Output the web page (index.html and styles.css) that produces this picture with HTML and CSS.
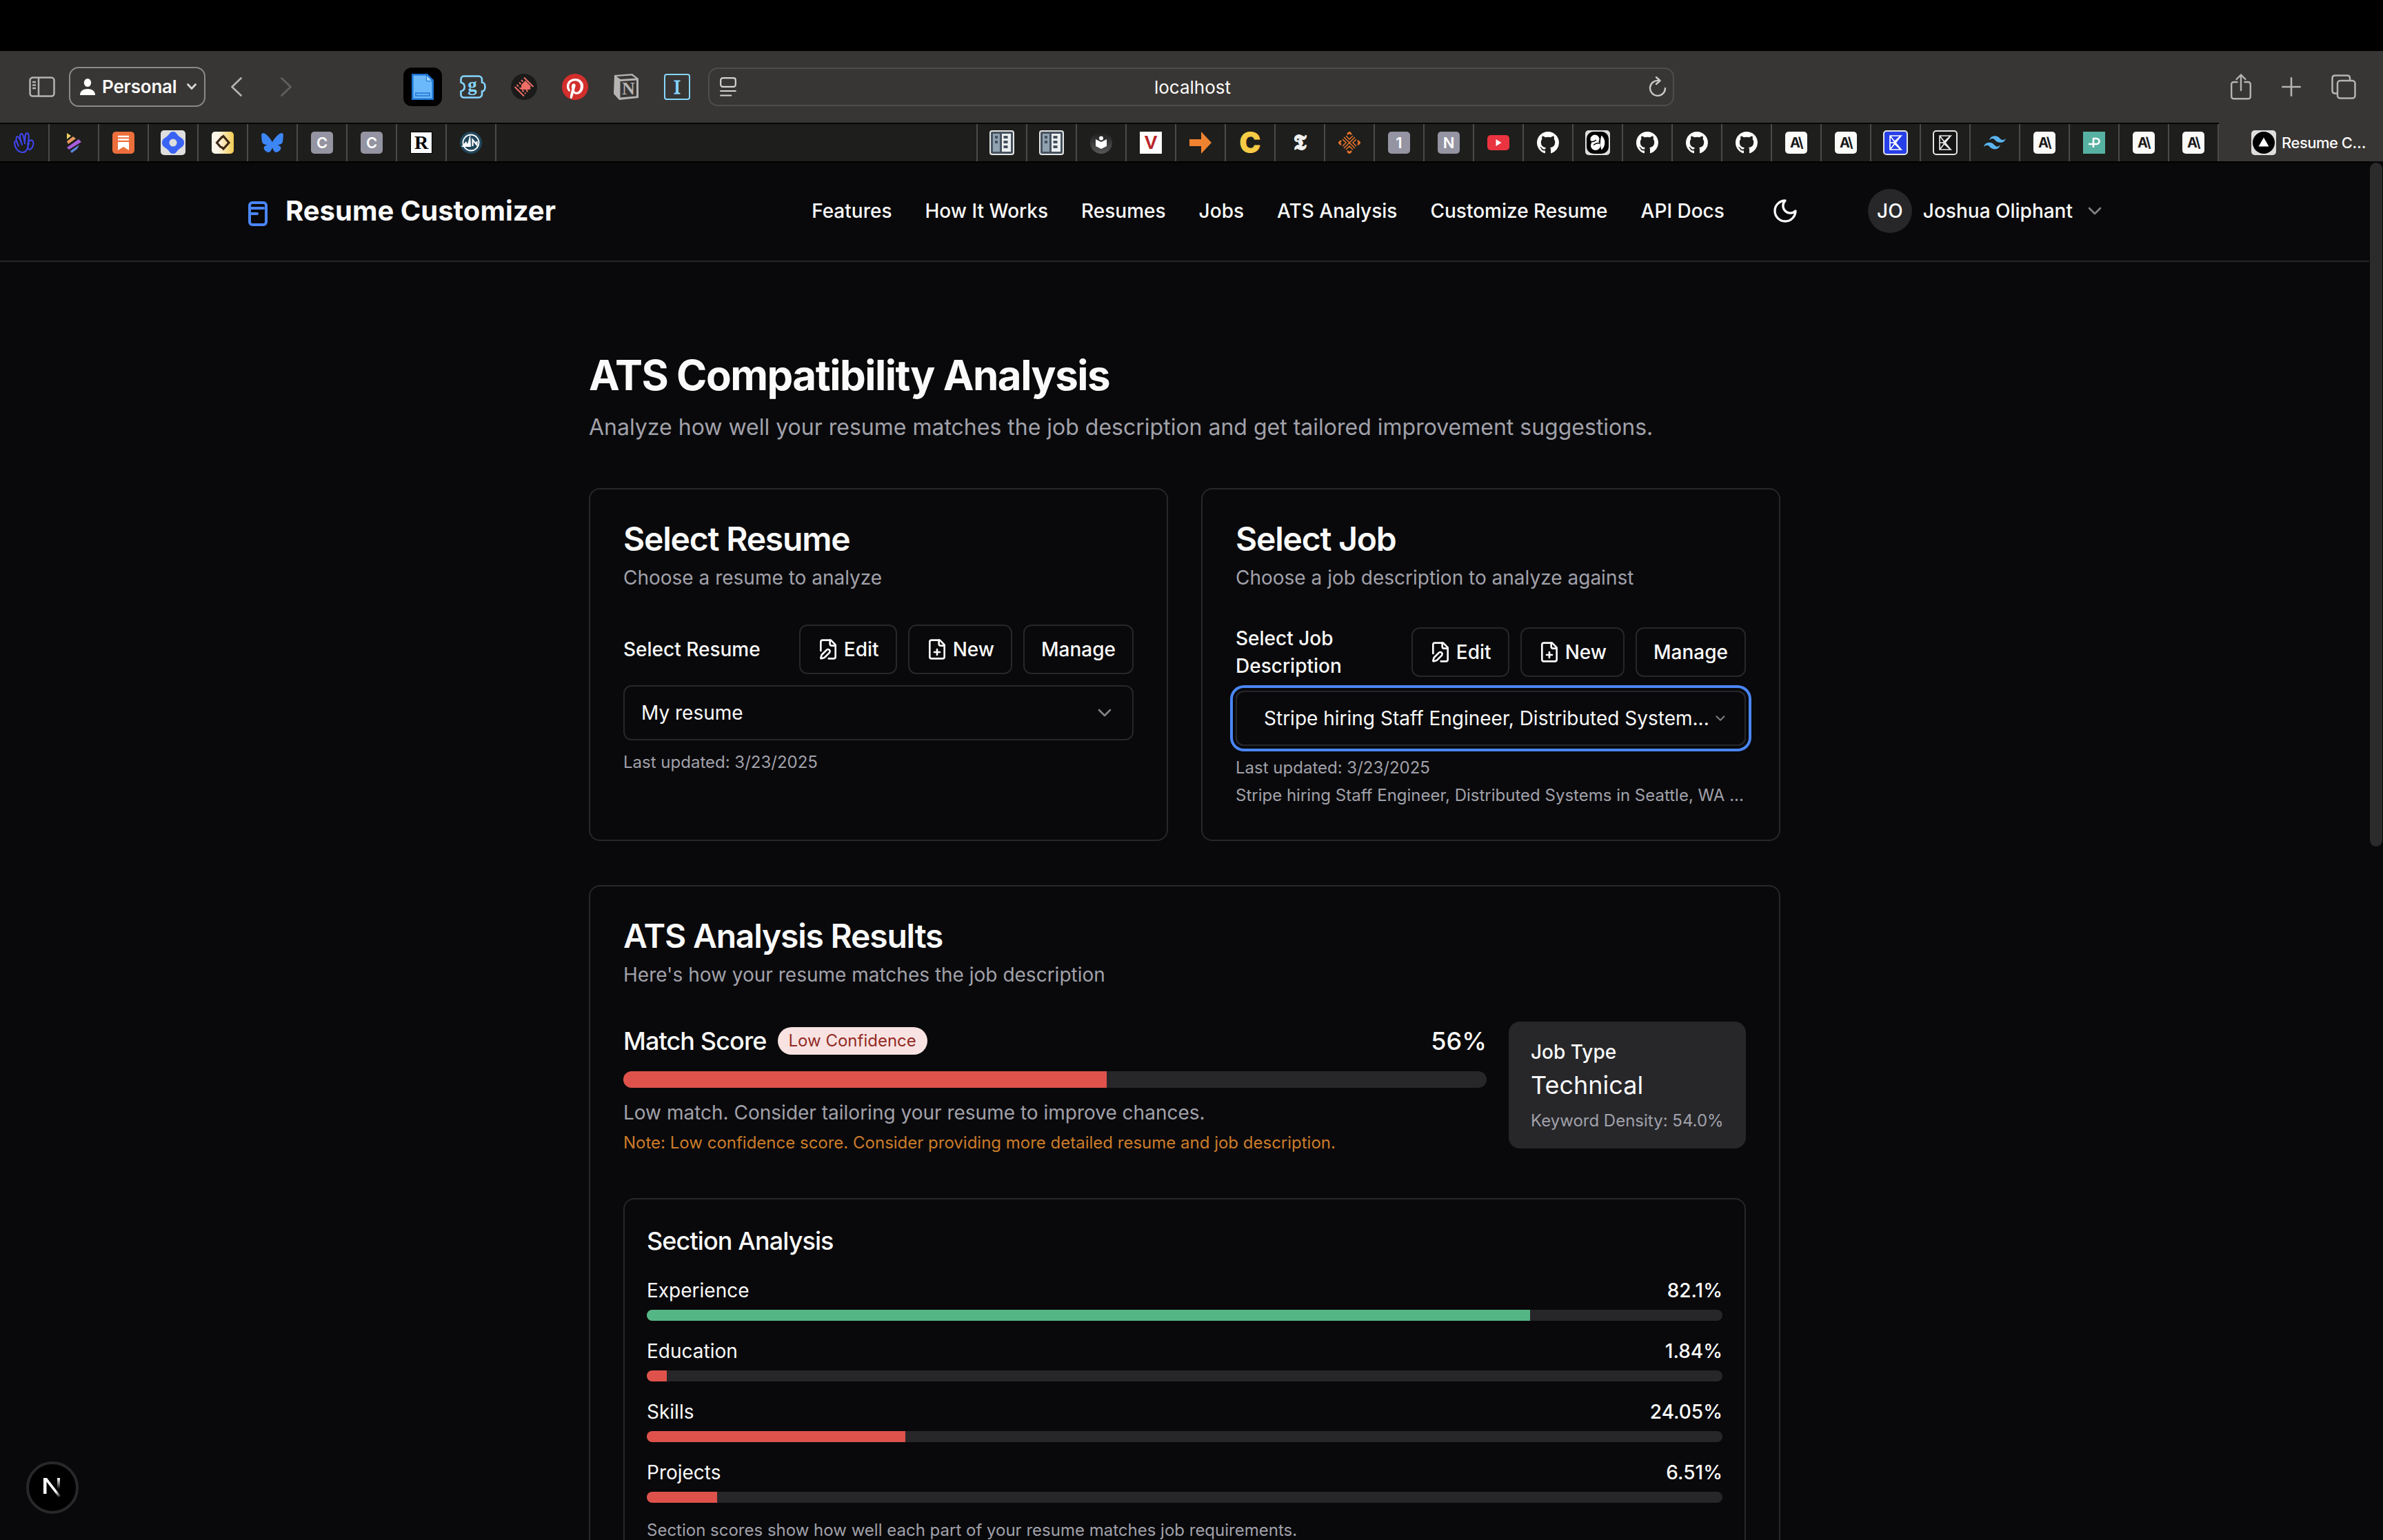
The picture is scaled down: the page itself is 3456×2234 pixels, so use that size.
FILE: index.html
```html
<!DOCTYPE html>
<html lang="en">
<head>
<meta charset="utf-8">
<title>Resume Customizer</title>
<link rel="stylesheet" href="styles.css">
</head>
<body>
<svg class="sprite" aria-hidden="true">
  <symbol id="github" viewBox="0 0 16 16"><path fill="#fff" d="M8 0C3.58 0 0 3.58 0 8c0 3.54 2.29 6.53 5.47 7.59.4.07.55-.17.55-.38 0-.19-.01-.82-.01-1.49-2.01.37-2.53-.49-2.69-.94-.09-.23-.48-.94-.82-1.13-.28-.15-.68-.52-.01-.53.63-.01 1.08.58 1.23.82.72 1.21 1.87.87 2.33.66.07-.52.28-.87.51-1.07-1.78-.2-3.64-.89-3.64-3.95 0-.87.31-1.59.82-2.15-.08-.2-.36-1.02.08-2.12 0 0 .67-.21 2.2.82.64-.18 1.32-.27 2-.27s1.36.09 2 .27c1.53-1.04 2.2-.82 2.2-.82.44 1.1.16 1.92.08 2.12.51.56.82 1.27.82 2.15 0 3.07-1.87 3.75-3.65 3.95.29.25.54.73.54 1.48 0 1.07-.01 1.93-.01 2.2 0 .21.15.46.55.38A8.01 8.01 0 0 0 16 8c0-4.42-3.58-8-8-8z"/></symbol>
  <symbol id="board" viewBox="0 0 36 36"><rect width="36" height="36" rx="4" fill="#e4e4e4"/><rect x="2" y="2" width="32" height="32" rx="2" fill="#46525f"/><rect x="5" y="5" width="10" height="26" fill="#90a1b0"/><rect x="18" y="5" width="13" height="26" fill="#eceff1"/><g fill="#46525f"><rect x="8" y="8" width="4" height="4"/><rect x="8" y="15" width="4" height="4"/><rect x="20.500" y="8" width="6" height="4"/><rect x="20.500" y="15" width="6" height="4"/><rect x="20.500" y="22" width="6" height="4"/></g></symbol>
  <symbol id="kite" viewBox="0 0 24 24"><path d="M4 2h16L9 12l11 10H4V2zM4 12h5M4 2l16 20M4 22 20 2" fill="none" stroke="currentColor" stroke-width="1.700"/></symbol>
  <symbol id="chevron" viewBox="0 0 24 24"><path d="m6 9 6 6 6-6" fill="none" stroke="currentColor" stroke-width="2" stroke-linecap="round" stroke-linejoin="round"/></symbol>
  <symbol id="file-pen" viewBox="0 0 24 24"><g fill="none" stroke="currentColor" stroke-width="2" stroke-linecap="round" stroke-linejoin="round"><path d="M12.500 22H18a2 2 0 0 0 2-2V7l-5-5H6a2 2 0 0 0-2 2v9.500"/><path d="M14 2v4a2 2 0 0 0 2 2h4"/><path d="M13.378 15.626a1 1 0 1 0-3.004-3.004l-5.010 5.012a2 2 0 0 0-.506.854l-.837 2.870a.5.5 0 0 0 .62.62l2.870-.837a2 2 0 0 0 .854-.506z"/></g></symbol>
  <symbol id="file-plus" viewBox="0 0 24 24"><g fill="none" stroke="currentColor" stroke-width="2" stroke-linecap="round" stroke-linejoin="round"><path d="M15 2H6a2 2 0 0 0-2 2v16a2 2 0 0 0 2 2h12a2 2 0 0 0 2-2V7Z"/><path d="M14 2v4a2 2 0 0 0 2 2h4M9 15h6M12 18v-6"/></g></symbol>
</svg>

<div class="screen-top"></div>

<div class="toolbar">
  <div class="tools-left">
    <svg class="i-sidebar" viewBox="0 0 38 30" fill="none" stroke="#b5b4b2" stroke-width="2.500"><rect x="1.500" y="1.500" width="35" height="27" rx="4"/><path d="M14 2v26M5 8h5M5 12.500h5M5 17h5"/></svg>
    <button class="profile">
      <svg class="i-person" viewBox="0 0 22 24" fill="#fff"><ellipse cx="11" cy="6" rx="5.200" ry="6"/><path d="M0 24c0-6 4.500-9 11-9s11 3 11 9z"/></svg>
      <span>Personal</span>
      <svg class="i-drop" viewBox="0 0 14 10" fill="none" stroke="#d8d7d6" stroke-width="2.800" stroke-linecap="round" stroke-linejoin="round"><path d="m1.500 1.500 5.500 6 5.500-6"/></svg>
    </button>
    <svg class="i-back" viewBox="0 0 16 28" fill="none" stroke="#b5b4b2" stroke-width="2.600" stroke-linecap="round" stroke-linejoin="round"><path d="M14.500 1.500 1.500 14l13 12.500"/></svg>
    <svg class="i-forward" viewBox="0 0 16 28" fill="none" stroke="#62605e" stroke-width="2.600" stroke-linecap="round" stroke-linejoin="round"><path d="M1.500 1.500 14.500 14l-13 12.500"/></svg>
  </div>
  <div class="extensions">
    <div class="ext-active"><svg width="32" height="38" viewBox="0 0 32 38"><path d="M0 0h23l9 9v29H0z" fill="#1d74d2"/><path d="M2.500 2.500H21V11h8.500v24.500h-27z" fill="#6bb8fb"/><path d="M22 3l7 7h-7z" fill="#a9d8ff"/><path d="M5 27h22v6H5z" fill="#2f86dd"/><path d="M7 30h18" stroke="#7fc3ff" stroke-width="1.500"/></svg></div>
    <div class="ext ext-g"><svg width="38" height="34" viewBox="0 0 38 34" fill="none" stroke="#86d6ff" stroke-width="2.600"><path d="M6 1.500h21c3 0 5 2 5 5v4c6 0 6 13 0 13v4c0 3-2 5-5 5H6c-3 0-4.500-2-4.500-4v-5c7-2 7-11 0-13V6c0-3 2-4.500 4.500-4.500z"/></svg><span>g</span></div>
    <svg width="38" height="38" viewBox="0 0 38 38"><circle cx="19" cy="19" r="19" fill="#1a1a1a"/><path d="m21 10 8 8.500-3 4.500H15v-7z" fill="#ee6d66"/><path d="M19 5.500 32.500 19M5.500 19 19 32.500" stroke="#ee6d66" stroke-width="2" fill="none"/><path d="m8.500 16 13 13M12 12.500l5 5M24.500 26l-4-4M15 9l4 4M28 22.500l-2-2" stroke="#ee6d66" stroke-width="2" stroke-dasharray="3.500 2" fill="none"/></svg>
    <svg width="38" height="38" viewBox="0 0 24 24"><circle cx="12" cy="12" r="11.500" fill="#fff"/><path fill="#d32f2c" d="M12 0C5.373 0 0 5.372 0 12c0 5.084 3.163 9.426 7.627 11.174-.105-.949-.2-2.405.042-3.441.218-.937 1.407-5.965 1.407-5.965s-.359-.719-.359-1.782c0-1.668.967-2.914 2.171-2.914 1.023 0 1.518.769 1.518 1.690 0 1.029-.655 2.568-.994 3.995-.283 1.194.599 2.169 1.777 2.169 2.133 0 3.772-2.249 3.772-5.495 0-2.873-2.064-4.882-5.012-4.882-3.414 0-5.418 2.561-5.418 5.207 0 1.031.397 2.138.893 2.738.098.119.112.224.083.345l-.333 1.360c-.053.22-.174.267-.402.161-1.499-.698-2.436-2.889-2.436-4.649 0-3.785 2.750-7.262 7.929-7.262 4.163 0 7.398 2.967 7.398 6.931 0 4.136-2.607 7.464-6.227 7.464-1.216 0-2.359-.631-2.750-1.378l-.748 2.853c-.271 1.043-1.002 2.350-1.492 3.146 1.124.347 2.317.535 3.554.535 6.627 0 12-5.373 12-12 0-6.628-5.373-12-12-12z"/></svg>
    <div class="ext ext-n"><svg width="38" height="38" viewBox="0 0 38 38"><path d="M2 2 28 0l9 7v28L9 38l-8-9z" fill="#b5b4b2"/><path d="M5 4l22-1.500 6 4L11 8z" fill="#383634"/><path d="M10.500 11 34 9.500v23L10.500 34.500z" fill="#383634"/></svg><span>N</span></div>
    <div class="ext ext-i">I</div>
  </div>
  <div class="address">
    <svg width="24" height="28" viewBox="0 0 24 28" fill="none" stroke="#d5d4d3" stroke-width="2.200" stroke-linecap="round"><rect x="1.200" y="1.200" width="21.600" height="12.600" rx="3"/><path d="M1.200 20h21.600M1.200 26.500h15"/></svg>
    <span>localhost</span>
    <svg width="26" height="30" viewBox="0 0 26 30" fill="none" stroke="#c9c8c7" stroke-width="2.400" stroke-linecap="round" stroke-linejoin="round"><path d="M14.500 6A11 11 0 1 0 24 17M11 1l5.500 5L11 11"/></svg>
  </div>
  <div class="tools-right">
    <svg width="30" height="38" viewBox="0 0 30 38" fill="none" stroke="#b5b4b2" stroke-width="2.400" stroke-linecap="round" stroke-linejoin="round"><path d="M9.500 12H5c-2.500 0-3.800 1.200-3.800 3.500v17c0 2.500 1.300 3.800 3.800 3.800h20c2.500 0 3.800-1.300 3.800-3.800v-17c0-2.300-1.300-3.500-3.800-3.500h-4.500M15 24V1.500M8.500 8 15 1.500 21.500 8"/></svg>
    <svg width="28" height="28" viewBox="0 0 28 28" fill="none" stroke="#b5b4b2" stroke-width="2.600" stroke-linecap="round"><path d="M14 1.300v25.400M1.300 14h25.400"/></svg>
    <svg width="36" height="36" viewBox="0 0 36 36" fill="none" stroke="#b5b4b2" stroke-width="2.500"><path d="M8 27.500H5.500c-2.500 0-4-1.500-4-4V5.500c0-2.500 1.500-4 4-4H23c2.500 0 4 1.500 4 4V8"/><rect x="9" y="9" width="25.500" height="25.500" rx="4"/></svg>
  </div>
</div>

<div class="tabs">
  <div class="tab-group">
    <div class="tab"><svg width="30" height="32" viewBox="0 0 30 32" fill="none" stroke="#3f45ee" stroke-width="2" stroke-linejoin="round" stroke-linecap="round"><path d="M13 30C5 30 1 22 1 15c2-3 4 0 6 6C4 15 2 8 5 7c3 0 5 7 7 12C10 12 7 4 11 3c3 0 4 8 5 14 0-7 0-14 3-15 4-1 3 9 1 17 1-5 4-8 7-6 3 3 1 11-4 13-3 0-3-5-1-9-2 6-3 13-9 13z"/></svg></div>
    <div class="tab"><svg width="24" height="32" viewBox="0 0 24 32"><path d="M2 2l6 4-6 5z" fill="#f0d264"/><path d="M2 14 11 7l4 3L4 18z" fill="#e79a5b"/><path d="M2 23 19 11l4 4L5 26z" fill="#a85ddb"/><path d="M7 28l13-9-3 6-8 6z" fill="#5b86dd"/></svg></div>
    <div class="tab"><svg width="32" height="32" viewBox="0 0 32 32"><rect width="32" height="32" rx="5" fill="#ec6f3c"/><path d="M8 7h16M8 11.500h16" stroke="#fff" stroke-width="2.400"/><path d="M8 15h16v12l-8-5-8 5z" fill="#fff"/></svg></div>
    <div class="tab"><svg width="36" height="36" viewBox="0 0 36 36"><rect width="36" height="36" rx="5" fill="#dedede"/><path d="M18 2c5 0 5 4 9 7s7 4 7 9-3 6-7 9-4 7-9 7-5-4-9-7-7-4-7-9 3-6 7-9 4-7 9-7z" fill="#3a63f5"/><circle cx="18" cy="18" r="5.500" fill="#dedede"/></svg></div>
    <div class="tab"><svg width="32" height="32" viewBox="0 0 32 32"><defs><linearGradient id="cream"><stop offset=".3" stop-color="#fcf6e8"/><stop offset="1" stop-color="#f2cb4d"/></linearGradient></defs><rect width="32" height="32" rx="5" fill="url(#cream)"/><path d="m15.500 7-8 9 6 7M14 9l3-2.500L25 16l-8 9-3-3" fill="none" stroke="#3d2817" stroke-width="3.200"/></svg></div>
    <div class="tab"><svg width="32" height="28" viewBox="0 0 568 501"><path fill="#3d86f6" d="M123.121 33.664C188.241 82.553 258.281 181.680 284 234.873c25.719-53.192 95.759-152.320 160.879-201.210C491.866-1.611 568-28.906 568 57.947c0 17.346-9.945 145.713-15.778 166.555-20.275 72.453-94.155 90.933-159.875 79.748C507.222 323.800 536.444 388.560 473.333 453.320c-119.860 122.992-172.272-30.859-185.702-70.281-2.462-7.227-3.614-10.608-3.631-7.733-.017-2.875-1.169.506-3.631 7.733-13.430 39.422-65.842 193.273-185.702 70.281-63.111-64.760-33.890-129.520 80.986-149.071-65.720 11.185-139.600-7.295-159.875-79.748C9.945 203.659 0 75.291 0 57.946 0-28.906 76.135-1.612 123.121 33.664Z"/></svg></div>
    <div class="tab"><span class="fav gray">C</span></div>
    <div class="tab"><span class="fav gray">C</span></div>
    <div class="tab"><span class="fav slab">R</span></div>
    <div class="tab"><svg width="32" height="32" viewBox="0 0 32 32"><circle cx="16" cy="16" r="16" fill="#21475c"/><circle cx="16" cy="16" r="11.500" fill="none" stroke="#fff" stroke-width="1.800"/><path d="M2 22 9 14l2 4 4-14 1 18z" fill="#fff"/><path d="M18.500 21v-9l6 7v-5" fill="none" stroke="#fff" stroke-width="2.200"/></svg></div>
  </div>
  <div class="tab-group tab-group-end">
    <div class="tab"><svg width="36" height="36"><use href="#board"/></svg></div>
    <div class="tab"><svg width="36" height="36"><use href="#board"/></svg></div>
    <div class="tab"><svg width="32" height="32" viewBox="0 0 32 32"><defs><linearGradient id="dusk" x2="0" y2="1"><stop stop-color="#1c1c1c"/><stop offset="1" stop-color="#585858"/></linearGradient></defs><circle cx="16" cy="16" r="16" fill="url(#dusk)"/><circle cx="16" cy="9.500" r="3" fill="#fff"/><path d="m8 11 8 4 8-4v10l-8 4-8-4z" fill="#fff"/></svg></div>
    <div class="tab"><span class="fav vee">V</span></div>
    <div class="tab"><svg width="32" height="32" viewBox="0 0 32 32"><path d="M0 11h17V0l15 16-15 16V21H0z" fill="#f08330"/></svg></div>
    <div class="tab"><span class="fav cee">C</span></div>
    <div class="tab"><span class="fav times">𝕿</span></div>
    <div class="tab"><svg width="32" height="32" viewBox="0 0 32 32" fill="none" stroke="#e8742c" stroke-width="1.500"><path d="M8 8l16 16M24 8 8 24M11 6l5 5 5-5M11 26l5-5 5 5M6 11l5 5-5 5M26 11l-5 5 5 5"/><path d="M13 4l3-3 3 3M13 28l3 3 3-3M4 13l-3 3 3 3M28 13l3 3-3 3" stroke-width="2.600"/></svg></div>
    <div class="tab"><span class="fav gray">1</span></div>
    <div class="tab"><span class="fav gray">N</span></div>
    <div class="tab"><svg width="32" height="22" viewBox="0 0 32 22"><rect width="32" height="22" rx="5" fill="#ea3440"/><path d="m12.500 6 8 5-8 5z" fill="#fff"/></svg></div>
    <div class="tab"><svg width="32" height="32"><use href="#github"/></svg></div>
    <div class="tab"><svg width="36" height="36" viewBox="0 0 36 36"><rect width="36" height="36" rx="5" fill="#dedede"/><rect x="2" y="2" width="32" height="32" rx="10" fill="#000"/><circle cx="14" cy="13" r="6.500" fill="#fff"/><circle cx="15" cy="22" r="7" fill="#fff"/><path d="M7 15.500c3 2 6 1 9-1.500M21 19c-3-1-6 0-9 2.500" stroke="#000" stroke-width="1.500" fill="none"/><path d="M23.500 7.500c6.500 5 6.500 16 0 21-2-6-2-15 0-21z" fill="#fff"/></svg></div>
    <div class="tab"><svg width="32" height="32"><use href="#github"/></svg></div>
    <div class="tab"><svg width="32" height="32"><use href="#github"/></svg></div>
    <div class="tab"><svg width="32" height="32"><use href="#github"/></svg></div>
    <div class="tab"><span class="fav ant">A\</span></div>
    <div class="tab"><span class="fav ant">A\</span></div>
    <div class="tab"><span class="fav kite blue"><svg width="24" height="26"><use href="#kite"/></svg></span></div>
    <div class="tab"><span class="fav kite"><svg width="24" height="26"><use href="#kite"/></svg></span></div>
    <div class="tab"><svg width="32" height="20" viewBox="0 0 54 33"><path fill="#5ab4f0" d="M27 0c-7.200 0-11.700 3.600-13.500 10.800 2.700-3.600 5.850-4.950 9.450-4.050 2.054.513 3.522 2.004 5.147 3.653C30.744 13.090 33.808 16.200 40.500 16.200c7.200 0 11.700-3.600 13.500-10.800-2.700 3.600-5.850 4.950-9.450 4.050-2.054-.513-3.522-2.004-5.147-3.653C36.756 3.110 33.692 0 27 0zM13.500 16.200C6.300 16.200 1.800 19.800 0 27c2.700-3.600 5.850-4.950 9.450-4.050 2.054.514 3.522 2.004 5.147 3.653C17.244 29.290 20.308 32.400 27 32.400c7.200 0 11.700-3.600 13.500-10.800-2.700 3.600-5.850 4.950-9.450 4.050-2.054-.513-3.522-2.004-5.147-3.653C23.256 19.310 20.192 16.200 13.500 16.200z"/></svg></div>
    <div class="tab"><span class="fav ant">A\</span></div>
    <div class="tab"><svg width="32" height="32" viewBox="0 0 32 32"><rect width="32" height="32" fill="#57b1a2"/><path d="M15 23V10h4.500a4 4 0 0 1 0 8H8" fill="none" stroke="#fff" stroke-width="2.600"/></svg></div>
    <div class="tab"><span class="fav ant">A\</span></div>
    <div class="tab"><span class="fav ant">A\</span></div>
  </div>
  <div class="tab-active">
    <svg width="36" height="36" viewBox="0 0 36 36"><rect width="36" height="36" rx="5" fill="#dedede"/><circle cx="18" cy="18" r="16" fill="#000"/><path d="m18 10.500 7.500 13h-15z" fill="#fff"/></svg>
    <span>Resume C…</span>
  </div>
</div>

<div class="viewport">
  <div class="page">
    <header class="site-header">
      <div class="header-inner">
        <div class="brand">
          <svg class="brand-icon" viewBox="0 0 24 24" fill="none" stroke="#4a86f7" stroke-width="2" stroke-linecap="round" stroke-linejoin="round"><rect x="6" y="4" width="12" height="16" rx="2"/><path d="M7 8h9M7 12h4.500"/></svg>
          <span>Resume Customizer</span>
        </div>
        <nav class="nav">
          <a>Features</a><a>How It Works</a><a>Resumes</a><a>Jobs</a><a>ATS Analysis</a><a>Customize Resume</a><a>API Docs</a>
        </nav>
        <button class="theme"><svg width="40" height="40" viewBox="0 0 24 24" fill="none" stroke="currentColor" stroke-width="2" stroke-linecap="round" stroke-linejoin="round"><path d="M12 3a6 6 0 0 0 9 9 9 9 0 1 1-9-9Z"/></svg></button>
        <div class="user"><span class="avatar">JO</span><span>Joshua Oliphant</span><svg class="chev"><use href="#chevron"/></svg></div>
      </div>
    </header>

    <main class="content">
      <h1>ATS Compatibility Analysis</h1>
      <p class="lead">Analyze how well your resume matches the job description and get tailored improvement suggestions.</p>

      <div class="pickers">
        <section class="card">
          <h2>Select Resume</h2>
          <p class="sub">Choose a resume to analyze</p>
          <div class="card-body">
            <div class="pick-row">
              <span class="label">Select Resume</span>
              <div class="buttons">
                <button class="btn"><svg><use href="#file-pen"/></svg>Edit</button>
                <button class="btn"><svg><use href="#file-plus"/></svg>New</button>
                <button class="btn">Manage</button>
              </div>
            </div>
            <div class="select"><span>My resume</span><svg class="chev"><use href="#chevron"/></svg></div>
            <p class="meta">Last updated: 3/23/2025</p>
          </div>
        </section>
        <section class="card">
          <h2>Select Job</h2>
          <p class="sub">Choose a job description to analyze against</p>
          <div class="card-body">
            <div class="pick-row">
              <span class="label">Select Job<br>Description</span>
              <div class="buttons">
                <button class="btn"><svg><use href="#file-pen"/></svg>Edit</button>
                <button class="btn"><svg><use href="#file-plus"/></svg>New</button>
                <button class="btn">Manage</button>
              </div>
            </div>
            <div class="select focused"><span>Stripe hiring Staff Engineer, Distributed System...</span><svg class="chev small"><use href="#chevron"/></svg></div>
            <div class="meta-list">
              <p class="meta">Last updated: 3/23/2025</p>
              <p class="meta">Stripe hiring Staff Engineer, Distributed Systems in Seattle, WA ...</p>
            </div>
          </div>
        </section>
      </div>

      <section class="card results">
        <h2>ATS Analysis Results</h2>
        <p class="sub">Here's how your resume matches the job description</p>
        <div class="card-body">
          <div class="score-grid">
            <div class="score">
              <div class="score-head"><span class="score-title">Match Score</span><span class="badge">Low Confidence</span><span class="score-value">56%</span></div>
              <div class="bar bar-lg"><div class="fill red" style="width:56%"></div></div>
              <p class="score-note">Low match. Consider tailoring your resume to improve chances.</p>
              <p class="score-warn">Note: Low confidence score. Consider providing more detailed resume and job description.</p>
            </div>
            <aside class="job-type">
              <div class="jt-label">Job Type</div>
              <div class="jt-value">Technical</div>
              <div class="jt-meta">Keyword Density: 54.0%</div>
            </aside>
          </div>
          <div class="sections">
            <h3>Section Analysis</h3>
            <div class="section-list">
              <div class="row"><div class="row-head"><span>Experience</span><b>82.1%</b></div><div class="bar"><div class="fill green" style="width:82.1%"></div></div></div>
              <div class="row"><div class="row-head"><span>Education</span><b>1.84%</b></div><div class="bar"><div class="fill red" style="width:1.84%"></div></div></div>
              <div class="row"><div class="row-head"><span>Skills</span><b>24.05%</b></div><div class="bar"><div class="fill red" style="width:24.05%"></div></div></div>
              <div class="row"><div class="row-head"><span>Projects</span><b>6.51%</b></div><div class="bar"><div class="fill red" style="width:6.51%"></div></div></div>
              <p class="meta">Section scores show how well each part of your resume matches job requirements.</p>
            </div>
          </div>
        </div>
      </section>
    </main>
  </div>
  <div class="scrollbar"><div class="thumb"></div></div>
  <div class="dev-badge"><svg width="26" height="28" viewBox="0 0 26 28"><defs><linearGradient id="fade-d" x1="0" y1="0" x2="1" y2="1"><stop offset=".7" stop-color="#fff"/><stop offset="1" stop-color="#fff" stop-opacity="0"/></linearGradient><linearGradient id="fade-v" x2="0" y2="1"><stop stop-color="#fff"/><stop offset="1" stop-color="#fff" stop-opacity="0"/></linearGradient></defs><path d="M0 23V0h5l20 26-3 2L4.500 5.500V23z" fill="url(#fade-d)"/><path d="M20 0h4v16h-4z" fill="url(#fade-v)"/></svg></div>
</div>
</body>
</html>
```
FILE: styles.css
```css
* { box-sizing: border-box; margin: 0; padding: 0; }
body {
  width: 3456px; height: 2234px; overflow: hidden;
  display: flex; flex-direction: column;
  background: #09090b; color: #fafafa;
  font-family: Inter, "Liberation Sans", sans-serif; font-size: 28px; line-height: 40px;
}
button { font: inherit; color: inherit; background: none; border: 0; }
svg { display: block; flex: none; }
.sprite { position: absolute; width: 0; height: 0; }
.screen-top { height: 74px; background: #000; flex: none; }

/* browser toolbar */
.toolbar {
  flex: none; height: 104px; background: #383634;
  display: grid; grid-template-columns: 585px 442px 1401px 1fr; align-items: center;
}
.tools-left { display: flex; align-items: center; padding-left: 42px; }
.i-sidebar { width: 38px; height: 30px; }
.profile {
  width: 198px; height: 58px; margin-left: 20px; padding: 0 11px 0 14px;
  border: 2px solid #8b8a88; border-radius: 14px;
  display: flex; align-items: center; font-weight: 600; font-size: 26px; letter-spacing: -.2px;
}
.i-person { width: 22px; height: 24px; margin-right: 10px; }
.i-drop { width: 14px; height: 10px; margin-left: auto; }
.i-back { width: 16px; height: 28px; margin-left: 37px; }
.i-forward { width: 16px; height: 28px; margin-left: 56px; }
.extensions { display: flex; align-items: center; gap: 36px; }
.ext-active {
  width: 56px; height: 56px; border-radius: 12px; background: #000; margin-right: -10px;
  display: grid; place-items: center;
}
.ext { width: 38px; height: 38px; display: grid; place-items: center; }
.ext > * { grid-area: 1 / 1; }
.ext-g span { color: #86d6ff; font: 700 27px/28px "Liberation Serif", serif; padding: 0 2px 7px 0; }
.ext-n span { color: #b5b4b2; font: 700 26px/26px "Liberation Serif", serif; padding: 6px 0 0 7px; }
.ext-i { border: 2.500px solid #86d6ff; border-radius: 4px; color: #86d6ff; font: 30px/34px "Liberation Serif", serif; -webkit-text-stroke: 1px #86d6ff; }
.address {
  height: 56px; border: 2px solid #4f4d4b; border-radius: 14px; padding: 0 9px 0 15px;
  display: flex; align-items: center; justify-content: space-between; font-size: 26px;
}
.address span { padding-top: 2px; }
.tools-right { display: flex; align-items: center; justify-content: flex-end; gap: 44px; padding-right: 39px; }

/* tab strip */
.tabs { flex: none; height: 56px; display: flex; background: #1e1e1c; }
.tab-group { display: flex; border-top: 2px solid #050505; }
.tab-group:first-child { flex: 1; }
.tab { width: 72px; border-right: 2px solid #4a4a48; display: grid; place-items: center; }
.tab-group-end .tab:first-child { width: 74px; border-left: 2px solid #4a4a48; }
.tab-active {
  width: 238px; background: #383634; padding: 2px 0 0 47px;
  display: flex; align-items: center; gap: 8px; font-size: 22px; font-weight: 500; white-space: nowrap; letter-spacing: -.5px;
}
.fav { width: 32px; height: 32px; border-radius: 5px; display: grid; place-items: center; line-height: 32px; overflow: hidden; }
.gray { background: #9494a2; color: #fff; font-size: 22px; font-weight: 600; }
.slab { background: #f8fafc; border: 1px solid #000; border-radius: 0; color: #000; font: 700 28px/30px "Liberation Serif", serif; }
.vee { background: #fff; border-radius: 0; color: #b82428; font: 700 28px/32px "Liberation Sans", sans-serif; }
.cee { color: #f5cb45; font: 900 42px/32px Inter, sans-serif; overflow: visible; }
.times { color: #f0f0f0; font: 700 30px/32px "DejaVu Serif", "DejaVu Sans", serif; overflow: visible; -webkit-text-stroke: 1px #f0f0f0; }
.ant { background: #fafaf8; color: #191919; font-size: 20px; font-weight: 700; letter-spacing: -1.500px; }
.kite { width: 36px; height: 36px; border: 2px solid #e4e4e4; background: #141414; color: #e8e8e8; }
.kite.blue { background: #263fe8; color: #fff; }

/* page area */
.viewport { flex: 1; min-height: 0; display: flex; position: relative; }
.page { flex: 1; min-width: 0; overflow: hidden; box-shadow: inset 0 2px #000; }
.scrollbar { width: 20px; padding: 2px 1px 0 1px; }
.thumb { height: 992px; border-radius: 9px; background: #2b2b2c; }
.site-header { height: 146px; border-bottom: 2px solid #27272a; }
.header-inner {
  width: 2800px; height: 144px; margin: 0 auto; padding: 0 32px;
  display: flex; align-items: center; font-weight: 500; white-space: nowrap;
}
.brand { display: flex; align-items: center; gap: 16px; margin-right: auto; font-size: 40px; font-weight: 700; }
.brand-icon { width: 48px; height: 48px; margin-top: 8px; }
.nav { display: flex; gap: 48px; }
.theme { width: 80px; height: 80px; margin: 0 80px 0 48px; display: grid; place-items: center; }
.user { display: flex; align-items: center; gap: 16px; padding-right: 32px; }
.avatar { width: 64px; height: 64px; border-radius: 50%; background: #27272a; display: grid; place-items: center; }
.chev { width: 32px; height: 32px; opacity: .5; }

.content { width: 1728px; margin: 0 auto; padding-top: 128px; }
h1 { font-size: 60px; line-height: 72px; font-weight: 700; letter-spacing: -.025em; }
.lead { margin-top: 16px; font-size: 32px; line-height: 48px; color: #a1a1aa; white-space: nowrap; }
.pickers { display: grid; grid-template-columns: 1fr 1fr; gap: 48px; margin-top: 64px; }
.card { border: 2px solid #27272a; border-radius: 16px; padding: 48px; min-width: 0; }
h2 { font-size: 48px; line-height: 48px; font-weight: 600; letter-spacing: -.025em; }
.sub { margin-top: 12px; color: #a1a1aa; }
.card-body { margin-top: 48px; }
.pick-row { display: flex; align-items: center; justify-content: space-between; }
.label { font-weight: 500; }
.buttons { display: flex; gap: 16px; }
.btn {
  height: 72px; padding: 0 24px; border: 2px solid #27272a; border-radius: 12px;
  display: flex; align-items: center; gap: 7px; font-weight: 500;
}
.btn svg { width: 32px; height: 32px; }
.select {
  height: 80px; margin-top: 16px; padding: 0 24px; border: 2px solid #27272a; border-radius: 12px;
  display: flex; align-items: center; justify-content: space-between; white-space: nowrap;
}
.select.focused { box-shadow: 0 0 0 4px #09090b, 0 0 0 8px #4a86f7; padding-left: 39px; }
.chev.small { width: 22px; height: 22px; }
.meta { margin-top: 16px; font-size: 24px; line-height: 32px; color: #a1a1aa; white-space: nowrap; }
.meta-list .meta + .meta { margin-top: 8px; }

.results { margin-top: 64px; }
.score-grid { display: grid; grid-template-columns: 1fr 344px; gap: 32px; align-items: start; }
.score-head { display: flex; align-items: center; font-size: 36px; line-height: 56px; font-weight: 500; }
.score-title { letter-spacing: -.025em; }
.badge {
  height: 40px; margin-left: 16px; padding: 4px 16px; border-radius: 20px;
  background: #f8e3e2; color: #932a25; font-size: 24px; line-height: 32px; font-weight: 400;
}
.score-value { margin-left: auto; }
.bar { height: 16px; margin-top: 8px; border-radius: 99px; background: #27272a; overflow: hidden; }
.bar-lg { height: 24px; margin-top: 16px; }
.fill { height: 100%; }
.red { background: #df524c; }
.green { background: #55b685; }
.score-note { margin-top: 16px; color: #a1a1aa; }
.score-warn { margin-top: 8px; font-size: 24px; line-height: 32px; color: #cc7c29; }
.job-type { padding: 24px 32px; border-radius: 16px; background: #27272a; white-space: nowrap; }
.jt-label { font-weight: 500; }
.jt-value { font-size: 36px; line-height: 56px; }
.jt-meta { margin-top: 8px; font-size: 24px; line-height: 32px; color: #a1a1aa; }
.sections { margin-top: 64px; border: 2px solid #27272a; border-radius: 16px; padding: 32px; }
h3 { font-size: 36px; line-height: 56px; font-weight: 500; letter-spacing: -.025em; }
.section-list { margin-top: 24px; display: grid; gap: 24px; }
.section-list .meta { margin-top: 0; }
.row-head { display: flex; justify-content: space-between; }
.row-head b { font-weight: 500; }
.dev-badge {
  position: absolute; left: 38px; top: 1886px; width: 76px; height: 76px; border-radius: 50%;
  background: #000; border: 4px solid #28282a; display: grid; place-items: center;
}
```
